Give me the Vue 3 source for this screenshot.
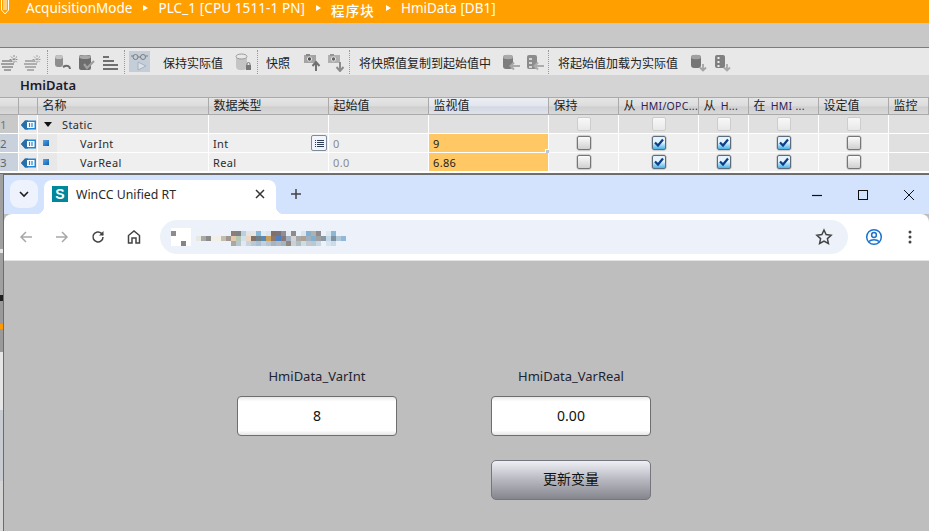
<script setup>
const rows = [
  { n: '1', kind: 'head', name: 'Static', type: '', start: '', mon: '', checks: [0, 0, 0, 0, 0], off: true },
  { n: '2', kind: 'var', name: 'VarInt', type: 'Int', start: '0', mon: '9', checks: [0, 1, 1, 1, 0], pick: true },
  { n: '3', kind: 'var', name: 'VarReal', type: 'Real', start: '0.0', mon: '6.86', checks: [0, 1, 1, 1, 0] },
]
const R = (x, y, c) => ({ x, y, c })
const line = (x0, y, s) => s.split(',').map((c, i) => (c ? R(x0 + i * 5, y, '#' + c) : null)).filter(Boolean)
const mosaic = [
  R(171, 231, '#8c8c8c'), R(181, 241, '#858585'),
  ...line(231, 231, '8a7f7a,808080,b8d0e0,e4e4e4,e8e4e0,88b8d8,e2eaf2,dde4ec,807068,7c7474,8e8e96,e8ecf2,8c8c8c,edf2fa,d6e6f4,84b0d0,b0b0b0,8c8c90,edf2fa,dce8f0,8cb8d8'),
  ...line(196, 236, 'e8e8e2,a8a8a8,8a8a8a,f0f0e8,f0f0e8,c4bcac,a09890,e8c8a8,b4c8b4,cfe0f0,f0d8c0,807068,70808a,5a88b0,c8a060,907868,5080c0,887878,a0b0c0,d4d4d4,a8a8a8,b0a090,a0b0c0,80b0d0,a0a0a0,8a98a6,c0d8e8,8090a0,b0c8d8,90b8d8'),
  ...line(231, 241, 'a8a8a8,b8c4d0,e0e8f0,c8d4e0,b8c8d4,a8c0d0,c0d0dc,b8c4d0,a8b4c0,b0bcc4,a8b4bc,908880,c8d0d8,b0c0c0,d0dce4,c0c8d0,b8c8d4,c8d8e4,edf2fa,d8e4ec,c8dcea'),
]
const cols = [
  { t: '保持' },
  { t: '从 ', l: 'HMI/OPC...' },
  { t: '从 ', l: 'H...' },
  { t: '在 ', l: 'HMI ...' },
  { t: '设定值' },
]
</script>

<template>
  <div class="screen">
    <header class="crumbs">
      <svg class="crumb-logo" width="8" height="15" viewBox="0 0 8 15"><path d="M.5 0v10L4 14l3.500-4V0M3 0v10M5 0v10" fill="none" stroke="#fff" stroke-width="1"/></svg>
      <span>AcquisitionMode</span><i class="tri"></i>
      <span class="wide">PLC_1 [CPU 1511-1 PN]</span><i class="tri"></i>
      <span class="cjk">程序块</span><i class="tri"></i>
      <span>HmiData [DB1]</span>
    </header>
    <div class="band"></div>

    <div class="tools">
      <div class="group g1">
        <svg class="ic" viewBox="0 0 20 20"><path d="M1 9h10M0 12h13M1 15h11M3 18h7" stroke="#a0a0a0" stroke-width="2"/><path d="M13 3v9M8.500 7.500h9M10 4.500l6 6M16 4.500l-6 6" stroke="#8c8c8c" stroke-width="1" stroke-dasharray="2 1"/></svg>
        <svg class="ic" viewBox="0 0 20 20"><path d="M1 9h10M0 12h13M1 15h11M3 18h7" stroke="#aeaeae" stroke-width="2"/><path d="M13 3v9M8.500 7.500h9M10 4.500l6 6M16 4.500l-6 6" stroke="#a0a0a0" stroke-width="1" stroke-dasharray="2 1"/></svg>
      </div>
      <div class="group g2">
        <svg class="ic" viewBox="0 0 20 20"><rect x="2" y="3" width="8" height="12" rx="3" fill="#8e8e8e"/><ellipse cx="6" cy="5" rx="4" ry="2" fill="#c4c4c4"/><path d="M17 17a3.500 3.500 0 0 0-5-3l-2 1" fill="none" stroke="#6c6c6c" stroke-width="2"/></svg>
        <svg class="ic" viewBox="0 0 20 20"><rect x="2" y="3" width="12" height="15" rx="2" fill="#6e6e6e"/><ellipse cx="8" cy="5" rx="6" ry="2" fill="#a8a8a8"/><path d="M7 12l3 4 7-7" fill="none" stroke="#a0a0a0" stroke-width="2.200"/></svg>
        <svg class="ic" viewBox="0 0 20 20"><path d="M2 5h6M2 9h11M2 13h15M2 17h15" stroke="#707070" stroke-width="2"/></svg>
      </div>
      <div class="group g3">
        <div class="active">
          <svg width="21" height="21" viewBox="0 0 21 21"><circle cx="6.500" cy="6" r="2.500" fill="none" stroke="#7c7c7c"/><circle cx="14" cy="6" r="2.500" fill="none" stroke="#7c7c7c"/><path d="M9 6h2.500M2 5h2M16.500 5H19" stroke="#7c7c7c"/><path d="M9 11v8l8-4z" fill="#dde2e9" stroke="#a8b0bc"/></svg>
        </div>
        <span class="tool-text t-keep">保持实际值</span>
        <svg class="ic t-db" viewBox="0 0 20 20"><rect x="3" y="2" width="11" height="16" rx="4" fill="#c4c4c4"/><ellipse cx="8.500" cy="4.500" rx="5.500" ry="2.500" fill="#e8e8e8" stroke="#9c9c9c"/><rect x="13" y="13" width="5" height="5" fill="#777"/><path d="M14 13v-1a1.500 1.500 0 0 1 3 0v1" fill="none" stroke="#777"/></svg>
      </div>
      <div class="group g4">
        <span class="tool-text t-snap">快照</span>
        <svg class="ic t-up" viewBox="0 0 20 20"><rect x="1" y="3" width="12" height="8" fill="#a4a4a4"/><rect x="3" y="2" width="4" height="2" fill="#888"/><circle cx="6.500" cy="7" r="2.200" fill="#555" stroke="#e4e4e4"/><path d="M13 19v-8M9.500 14l3.500-4 3.500 4" fill="none" stroke="#707070" stroke-width="2"/></svg>
        <svg class="ic" viewBox="0 0 20 20"><rect x="1" y="3" width="12" height="8" fill="#b0b0b0"/><rect x="3" y="2" width="4" height="2" fill="#969696"/><circle cx="6.500" cy="7" r="2.200" fill="#666" stroke="#e4e4e4"/><path d="M13 10v8M9.500 15l3.500 4 3.500-4" fill="none" stroke="#8c8c8c" stroke-width="2"/></svg>
      </div>
      <div class="group g5">
        <span class="tool-text t-copy">将快照值复制到起始值中</span>
        <svg class="ic t-left" viewBox="0 0 20 20"><rect x="2" y="3" width="10" height="14" rx="3" fill="#7c7c7c"/><ellipse cx="7" cy="5" rx="5" ry="2.200" fill="#aaa"/><path d="M19 14h-9M13 10.500L9.500 14l3.500 3.500" fill="none" stroke="#a8a8a8" stroke-width="2"/></svg>
        <svg class="ic" viewBox="0 0 20 20"><rect x="2" y="3" width="10" height="14" rx="2" fill="#8c8c8c"/><path d="M4 7h3M4 11h3M4 15h3" stroke="#eee" stroke-width="1.500"/><path d="M19 14h-9M13 10.500L9.500 14l3.500 3.500" fill="none" stroke="#adadad" stroke-width="2"/></svg>
      </div>
      <div class="group g6">
        <span class="tool-text t-load">将起始值加载为实际值</span>
        <svg class="ic t-down" viewBox="0 0 20 20"><rect x="2" y="3" width="10" height="13" rx="3" fill="#767676"/><ellipse cx="7" cy="5" rx="5" ry="2.200" fill="#a0a0a0"/><path d="M14 12v6M11 15.500l3 3 3-3" fill="none" stroke="#a4a4a4" stroke-width="1.800"/></svg>
        <svg class="ic" viewBox="0 0 20 20"><rect x="2" y="3" width="10" height="13" rx="2" fill="#808080"/><path d="M4.500 6h2M4.500 10h2M4.500 14h2" stroke="#eee" stroke-width="2"/><path d="M14 12v6M11 15.500l3 3 3-3" fill="none" stroke="#a8a8a8" stroke-width="1.800"/></svg>
      </div>
    </div>

    <div class="title">HmiData</div>

    <div class="table">
      <div class="th"></div>
      <div class="th"></div>
      <div class="th">名称</div>
      <div class="th">数据类型</div>
      <div class="th">起始值</div>
      <div class="th th-mon">监视值</div>
      <div v-for="c in cols" :key="c.t + c.l" class="th">{{ c.t }}<span v-if="c.l" class="latin">{{ c.l }}</span></div>
      <div class="th">监控</div>

      <template v-for="r in rows" :key="r.n">
        <div class="td num" :class="{ 'num-off': r.off }">{{ r.n }}</div>
        <div class="td iface">
          <svg width="15" height="10" viewBox="0 0 15 10"><path d="M0 5L4 .5h11v9H4z" fill="#1e86d6"/><path d="M0 5L4 .5h3v9H4z" fill="#2a6ea8"/><rect x="6" y="2" width="7.500" height="6" fill="#fff"/><path d="M8.500 3v4M11 3v4" stroke="#1e86d6" stroke-width="1.200"/></svg>
        </div>
        <div class="td name" :class="{ 'name-head': r.kind === 'head' }">
          <template v-if="r.kind === 'head'">
            <i class="expand"></i><span class="static-label">{{ r.name }}</span>
          </template>
          <template v-else>
            <span class="dot-cell"><i class="dot"></i></span><span class="var-label">{{ r.name }}</span>
          </template>
        </div>
        <div class="td type" :class="{ off: r.off }">
          {{ r.type }}
          <span v-if="r.pick" class="picker">
            <svg width="9" height="9" viewBox="0 0 9 9"><path d="M0 1.500h1M0 3.500h1M0 5.500h1M0 7.500h1M2 1.500h7M2 3.500h7M2 5.500h7M2 7.500h7" stroke="#2c3e55"/></svg>
          </span>
        </div>
        <div class="td start" :class="{ off: r.off }">{{ r.start }}</div>
        <div class="td mon" :class="{ off: r.off, 'mon-on': !r.off, 'mon-sel': r.pick }">{{ r.mon }}</div>
        <div v-for="(c, i) in r.checks" :key="i" class="td box-cell" :class="{ off: r.off }">
          <span class="box" :class="{ checked: c, disabled: r.off }">
            <svg v-if="c" width="14" height="14" viewBox="0 0 14 14"><path d="M3 6.500l3 3 5-6" fill="none" stroke="#0b3f8a" stroke-width="2.200"/></svg>
          </span>
        </div>
        <div class="td last"></div>
      </template>
    </div>

    <div class="lower">
      <div class="edge"></div>
      <section class="browser">
        <div class="tabstrip">
          <button class="tab-menu" aria-label="tabs">
            <svg width="12" height="12" viewBox="0 0 12 12"><path d="M2 4l4 4 4-4" fill="none" stroke="#1f1f1f" stroke-width="1.600"/></svg>
          </button>
          <div class="tab">
            <span class="favicon">S</span>
            <span class="tab-title">WinCC Unified RT</span>
            <svg class="tab-x" width="10" height="10" viewBox="0 0 10 10"><path d="M1 1l8 8M9 1l-8 8" stroke="#333" stroke-width="1.500"/></svg>
          </div>
          <div class="plus">
            <svg width="12" height="12" viewBox="0 0 12 12"><path d="M6 1v10M1 6h10" stroke="#444" stroke-width="1.500"/></svg>
          </div>
          <div class="winctl">
            <span><svg width="12" height="12" viewBox="0 0 12 12"><path d="M1 6.500h10" stroke="#111" stroke-width="1.200"/></svg></span>
            <span><svg width="12" height="12" viewBox="0 0 12 12"><rect x="1.500" y="1.500" width="9" height="9" fill="none" stroke="#111"/></svg></span>
            <span><svg width="12" height="12" viewBox="0 0 12 12"><path d="M1 1l10 10M11 1L1 11" stroke="#111"/></svg></span>
          </div>
        </div>

        <div class="navbar">
          <span class="nav"><svg width="16" height="16" viewBox="0 0 16 16"><path d="M14 8H3M8 3L3 8l5 5" fill="none" stroke="#a8a8a8" stroke-width="1.500"/></svg></span>
          <span class="nav"><svg width="16" height="16" viewBox="0 0 16 16"><path d="M2 8h11M8 3l5 5-5 5" fill="none" stroke="#a8a8a8" stroke-width="1.500"/></svg></span>
          <span class="nav"><svg width="16" height="16" viewBox="0 0 16 16"><path d="M13 8a5 5 0 1 1-1.500-3.600L13 6" fill="none" stroke="#444" stroke-width="1.500"/><path d="M13.500 2v4.500H9z" fill="#444"/></svg></span>
          <span class="nav"><svg width="16" height="16" viewBox="0 0 16 16"><path d="M2.500 14V6.500L8 2l5.500 4.500V14h-3.500V9H6v5z" fill="none" stroke="#444" stroke-width="1.500"/></svg></span>
          <div class="omnibox">
            <svg class="mosaic" width="212" height="36" viewBox="171 220 212 36">
              <rect x="171" y="228" width="20" height="18" fill="#fff"/>
              <rect v-for="(m, i) in mosaic" :key="i" :x="m.x" :y="m.y" width="5" height="5" :fill="m.c"/>
            </svg>
            <svg class="star" width="18" height="18" viewBox="0 0 18 18"><path d="M9 2l2.100 4.600 5 .6-3.700 3.400 1 4.900L9 13l-4.400 2.500 1-4.900L1.900 7.200l5-.6z" fill="none" stroke="#444" stroke-width="1.500"/></svg>
          </div>
          <span class="nav first-right"><svg width="18" height="18" viewBox="0 0 18 18"><circle cx="9" cy="9" r="7.300" fill="none" stroke="#1a73d0" stroke-width="1.500"/><circle cx="9" cy="7" r="2.400" fill="none" stroke="#1a73d0" stroke-width="1.500"/><path d="M4 13.500c2-2.500 8-2.500 10 0" fill="none" stroke="#1a73d0" stroke-width="1.500"/></svg></span>
          <span class="nav"><svg width="16" height="16" viewBox="0 0 16 16"><circle cx="8" cy="3" r="1.500" fill="#444"/><circle cx="8" cy="8" r="1.500" fill="#444"/><circle cx="8" cy="13" r="1.500" fill="#444"/></svg></span>
        </div>

        <main class="page">
          <div class="form">
            <label class="lbl">HmiData_VarInt</label>
            <label class="lbl">HmiData_VarReal</label>
            <div class="field">8</div>
            <div class="field">0.00</div>
            <div class="btn">更新变量</div>
          </div>
        </main>
      </section>
    </div>
  </div>
</template>

<style>
html, body { margin: 0; padding: 0; background: #bebebe; overflow: hidden; }
</style>

<style scoped>
.screen {
  width: 929px;
  height: 531px;
  overflow: hidden;
  display: flex;
  flex-direction: column;
  font-family: "Noto Sans", "Noto Sans CJK SC", sans-serif;
  background: #d4d4d4;
  color: #1e1e1e;
}
.crumbs {
  height: 23px;
  flex: none;
  box-sizing: border-box;
  background: #ffa000;
  color: #fff;
  display: flex;
  align-items: flex-start;
  font-size: 13.500px;
  line-height: 16px;
  white-space: nowrap;
}
.crumb-logo { margin: 0 17px 0 1px; flex: none; }
.crumbs span { display: block; }
.crumbs .wide { letter-spacing: .1px; }
.crumbs .cjk {
  font-size: 13.500px;
  letter-spacing: 1.100px;
  line-height: 20px;
  font-family: "Noto Sans CJK SC", sans-serif;
  font-weight: 500;
}
.tri {
  width: 0; height: 0;
  margin: 5px 10px 0 11px;
  border-left: 5px solid #fff;
  border-top: 3.500px solid transparent;
  border-bottom: 3.500px solid transparent;
}
.band { height: 24px; flex: none; background: #c8c8c8; border-bottom: 1px solid #7c7c7c; }
.tools {
  height: 27px;
  flex: none;
  background: #e8e8e8;
  display: flex;
  align-items: center;
}
.group {
  display: flex;
  align-items: center;
  gap: 4px;
  height: 24px;
  flex: none;
  border-right: 1px dotted #999;
}
.g1 { gap: 3px; padding: 0 3px 0 1px; }
.g2 { padding: 0 3px 0 5px; }
.g3 { padding: 0 4px; gap: 0; }
.g4 { padding: 0 2px 0 8px; }
.g5 { padding: 0 3px 0 9px; }
.g6 { padding-left: 9px; border: 0; }
.ic { width: 20px; height: 20px; flex: none; }
.active { width: 21px; height: 21px; background: #c3ced9; }
.active svg { display: block; }
.tool-text {
  font-size: 12px;
  line-height: 16px;
  margin-top: 2px;
  white-space: nowrap;
  font-family: "Noto Sans CJK SC", sans-serif;
  color: #222;
}
.t-keep { margin-left: 13px; }
.t-db { margin-left: 10px; }
.t-up { margin-left: 9px; }
.t-left { margin-left: 6px; }
.t-down { margin-left: 7px; }
.title {
  height: 22px;
  flex: none;
  box-sizing: border-box;
  padding-left: 20px;
  font-size: 13px;
  line-height: 21px;
  font-weight: 600;
  color: #1a1a2e;
  background: #d4d4d4;
}
.table {
  flex: none;
  display: grid;
  grid-template-columns: 19px 19px 171px 120px 100px 120px 70px 80px 50px 70px 70px 40px;
  grid-template-rows: 18px 19px 19px 19px;
  background: #fff;
  height: 76px;
  border-bottom: 1px solid #707070;
}
.th {
  box-sizing: border-box;
  border-top: 1px solid #aaa;
  border-right: 1px solid #aaa;
  border-bottom: 1px solid #aaa;
  background: linear-gradient(#e6e6e6, #dcdcdc 50%, #cfcfcf 55%, #d8d8d8);
  font-size: 12px;
  line-height: 16px;
  padding-left: 4.500px;
  white-space: nowrap;
  overflow: hidden;
  color: #222;
}
.th-mon { background: linear-gradient(#eceef4, #e2e5ee 50%, #d4d8e2 55%, #dfe2ea); }
.latin { font-size: 10.500px; letter-spacing: .3px; color: #2e2458; margin-left: 2px; }
.td {
  box-sizing: border-box;
  background: #efefef;
  border-right: 1px solid #fff;
  border-bottom: 1px solid #fff;
  font-size: 11px;
  line-height: 20px;
  padding-left: 4px;
  letter-spacing: .35px;
  position: relative;
  color: #2c2c2c;
  white-space: nowrap;
}
.off { background: #e0e0e0; }
.num { background: #c9d1dc; color: #666; padding-left: 0; font-size: 11.500px; }
.num-off { background: #c9c9c9; color: #777; }
.iface { padding: 5px 0 0 2px; background: #e9e9e9; line-height: 0; }
.name { display: flex; align-items: center; padding: 0; }
.name-head { background: #e0e0e0; padding-left: 6px; }
.expand {
  width: 0; height: 0;
  border-top: 5px solid #111;
  border-left: 4px solid transparent;
  border-right: 4px solid transparent;
}
.static-label { margin: 2px 0 0 10px; }
.dot-cell { width: 19px; height: 100%; background: #e8e8e8; display: flex; align-items: center; padding-left: 5px; box-sizing: border-box; }
.dot { width: 6px; height: 6px; background: linear-gradient(135deg, #55a6e4, #0d5fb0); }
.var-label { margin: 2px 0 0 23px; }
.start { color: #8a8a8a; }
.type { padding-left: 4px; }
.picker {
  position: absolute;
  right: 1px;
  top: 1px;
  width: 16px;
  height: 16px;
  box-sizing: border-box;
  border: 1px solid #7c8c9c;
  border-radius: 2px;
  background: #f2f6fc;
  display: flex;
  align-items: center;
  justify-content: center;
}
.mon { color: #222; }
.mon-on { background: #ffc864; }
.mon-sel::after {
  content: "";
  position: absolute;
  right: -3px;
  bottom: -3px;
  width: 4px;
  height: 4px;
  background: #b8c4d8;
  border: 1px solid #fff;
}
.box-cell { display: flex; align-items: center; justify-content: center; padding: 0 0 0 1px; }
.box {
  width: 14px;
  height: 14px;
  box-sizing: border-box;
  border: 1px solid #767676;
  border-radius: 2px;
  background: linear-gradient(#fbfbfb, #d0d0d0);
  box-shadow: 0 0 0 .5px #b0b0b0;
  display: block;
  position: relative;
}
.box svg { position: absolute; left: -1px; top: -1px; }
.checked { border-color: #5c6c7c; background: linear-gradient(#e6f3fb 0 45%, #48b4ea); }
.disabled { border-color: #cdcdcd; background: linear-gradient(#f8f8f8, #e8e8e8); box-shadow: none; }
.last { background: #e0e0e0; border-right: 0; }

.lower { flex: 1; min-height: 0; display: flex; }
.edge {
  width: 3px;
  flex: none;
  background: linear-gradient(#a0a0a0 0 21%, #e4e4e4 21% 22%, #a0a0a0 22% 34%, #1f1f1f 34% 35.500%, #9a9a9a 35.500% 42%, #ff9a00 42% 43.500%, #9a9a9a 43.500% 50%, #e6e6e6 50% 66%, #c8ccd2 66% 86%, #d4d4d4 86%);
}
.browser {
  flex: 1;
  min-width: 0;
  display: flex;
  flex-direction: column;
  border-left: 1px solid #6c6c6c;
  border-top: 1px solid #6c6c6c;
  background: #bebebe;
}
.tabstrip {
  height: 39px;
  flex: none;
  background: #d3e3fd;
  display: flex;
  align-items: flex-end;
  padding-left: 6px;
  box-sizing: border-box;
}
.tab-menu {
  width: 28px;
  height: 28px;
  margin: 0 0 6px;
  padding: 0;
  border: 0;
  border-radius: 9px;
  background: #edf2fc;
  display: flex;
  align-items: center;
  justify-content: center;
}
.tab {
  width: 232px;
  height: 34px;
  margin-left: 6px;
  background: #fff;
  border-radius: 8px 8px 0 0;
  display: flex;
  align-items: center;
  position: relative;
  padding: 0 11px 6px 8px;
  box-sizing: border-box;
}
.tab::before, .tab::after {
  content: "";
  position: absolute;
  bottom: 0;
  width: 8px;
  height: 8px;
}
.tab::before { left: -8px; background: radial-gradient(circle at 0 0, #d3e3fd 8px, #fff 8.500px); }
.tab::after { right: -8px; background: radial-gradient(circle at 100% 0, #d3e3fd 8px, #fff 8.500px); }
.favicon {
  width: 16px;
  height: 16px;
  background: #00879b;
  color: #fff;
  font: 700 14px/16px "Liberation Sans", sans-serif;
  text-align: center;
  flex: none;
}
.tab-title { margin-left: 8px; font-size: 12.300px; color: #2a2a2a; flex: 1; white-space: nowrap; }
.tab-x { flex: none; }
.plus { width: 24px; height: 28px; margin: 0 0 6px 8px; display: flex; align-items: center; justify-content: center; }
.winctl { margin-left: auto; margin-right: -3px; display: flex; align-self: stretch; }
.winctl span { width: 46px; display: flex; align-items: center; justify-content: center; }
.navbar {
  height: 46px;
  flex: none;
  background: #fff;
  border-radius: 8px 8px 0 0;
  border-bottom: 1px solid #e4e4e4;
  display: flex;
  align-items: center;
  padding-left: 4px;
  position: relative;
}
.nav { width: 36px; height: 36px; flex: none; display: flex; align-items: center; justify-content: center; }
.omnibox {
  width: 688px;
  height: 34px;
  margin-left: 8px;
  border-radius: 17px;
  background: #edf2fa;
  position: relative;
  flex: none;
}
.mosaic { position: absolute; left: 11px; top: 0; display: block; }
.star { position: absolute; right: 15px; top: 8px; }
.first-right { margin-left: 8px; }
.page { flex: 1; min-height: 0; background: #bebebe; padding: 0; }
.form {
  display: grid;
  grid-template-columns: 160px 160px;
  column-gap: 94px;
  grid-template-rows: 40px 40px 24px 40px;
  padding: 95px 0 0 233px;
}
.lbl {
  font-size: 13px;
  line-height: 40px;
  text-align: center;
  color: #1d2433;
}
.field {
  box-sizing: border-box;
  height: 40px;
  border: 1px solid #6e6e6e;
  border-radius: 4px;
  background: linear-gradient(#e8e8e8, #fff 12%, #fff 88%, #e6e6e6);
  text-align: center;
  font-size: 14px;
  line-height: 38px;
  color: #111;
}
.btn {
  grid-column: 2;
  grid-row: 4;
  box-sizing: border-box;
  height: 40px;
  border: 1px solid #76767e;
  border-radius: 5px;
  background: linear-gradient(#eef0f6, #bcbdc4 45%, #85858e);
  text-align: center;
  font-size: 14px;
  line-height: 35px;
  color: #111;
  font-family: "Noto Sans CJK SC", sans-serif;
}
</style>
